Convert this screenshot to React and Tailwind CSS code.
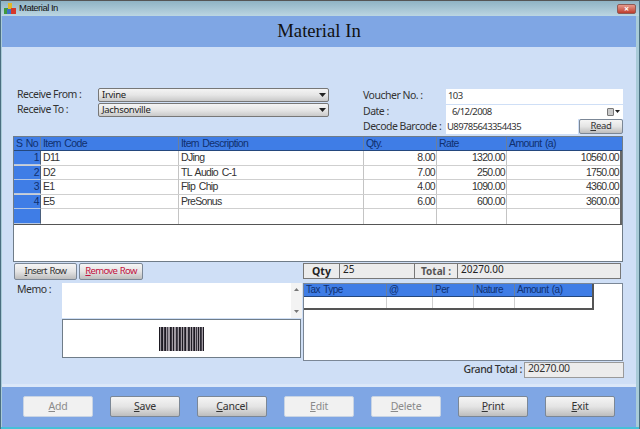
import React from "react";

const font = "font-['Noto_Sans','DejaVu_Sans',sans-serif]";
const gridFont = "font-['Liberation_Sans',sans-serif]";
const label = "text-[10.5px] tracking-[-0.5px] whitespace-nowrap";
const value = "text-[9.5px] tracking-[-0.6px] leading-none";

const rows = [
  { no: 1, code: "D11", desc: "DJing", qty: "8.00", rate: "1320.00", amount: "10560.00" },
  { no: 2, code: "D2", desc: "TL Audio C-1", qty: "7.00", rate: "250.00", amount: "1750.00" },
  { no: 3, code: "E1", desc: "Flip Chip", qty: "4.00", rate: "1090.00", amount: "4360.00" },
  { no: 4, code: "E5", desc: "PreSonus", qty: "6.00", rate: "600.00", amount: "3600.00" },
  { no: "", code: "", desc: "", qty: "", rate: "", amount: "" },
];

const gridCols = "grid grid-cols-[27px_138px_185px_73px_70px_1fr]";
const taxCols = "grid grid-cols-[83px_46px_41px_41px_1fr]";

const bars = [
  [0, "#1d1a22"], [2, "#2c2a33"], [3, "#1d1a22"], [5, "#3a3640"], [6, "#1d1a22"], [8, "#4a4650"],
  [11, "#1d1a22"], [12, "#3a3640"], [14, "#1d1a22"], [17, "#2c2a33"], [18, "#4a4650"], [20, "#1d1a22"],
  [21, "#3a3640"], [23, "#1d1a22"], [25, "#4a4650"], [26, "#1d1a22"], [29, "#2c2a33"], [30, "#3a3640"],
  [32, "#1d1a22"], [34, "#4a4650"], [35, "#1d1a22"], [37, "#3a3640"], [39, "#1d1a22"], [41, "#2c2a33"],
  [42, "#4a4650"], [44, "#1d1a22"],
];

const Caret = () => (
  <svg width="7" height="4" viewBox="0 0 7 4">
    <path d="M0 0h7L3.5 4z" fill="#222" />
  </svg>
);

const Select = ({ value }) => (
  <div className="h-[14px] w-[231px] flex items-center justify-between pl-[3px] pr-[2px] rounded-[2px] border border-[#777] bg-gradient-to-b from-[#f4f4f4] via-[#e6e6e6] to-[#c9c9c9] text-[9.5px] tracking-[-0.3px] leading-none text-[#222]">
    <span>{value}</span>
    <Caret />
  </div>
);

const Btn = ({ u, rest, off, w = "w-[70px]", h = "h-[21px]", red, text = "text-[10.5px] tracking-[-0.2px]" }) => (
  <div
    className={`${w} ${h} ${text} flex items-center justify-center rounded-[2px] border ${
      off
        ? "border-[#c8d4e4] bg-[#f1f1f1] text-[#8a8a8a]"
        : "border-[#7b8796] bg-gradient-to-b from-[#f5f5f5] via-[#e4e4e4] to-[#bdbdbd] text-[#333]"
    } ${red ? "text-[#c2123e]" : ""}`}
  >
    <span>
      <span className="underline">{u}</span>
      {rest}
    </span>
  </div>
);

export default function App() {
  return (
    <div className={`${font} w-[640px] h-[429px] flex flex-col overflow-hidden bg-[#a9cbd8] border-l border-r border-[#4a6f80] pl-[1px] pr-[3px] text-[10px]`}>
      {/* title bar */}
      <div className="h-[16px] -ml-[2px] -mr-[4px] shrink-0 flex items-center justify-between pl-[3px] pr-[4px] border-t border-[#555] bg-gradient-to-b from-[#8fb3c4] to-[#bcd6e2]">
        <div className={`${gridFont} flex items-center gap-[2px] text-[9.5px] tracking-[-0.5px] text-[#111]`}>
          <svg width="14" height="13" viewBox="0 0 14 13">
            <rect x="1" y="6" width="4" height="6" fill="#3f9a3d" />
            <rect x="5" y="1" width="4" height="6" fill="#e2b72a" />
            <rect x="4" y="7" width="4" height="5" fill="#3d72c8" />
            <rect x="8" y="6" width="5" height="6" fill="#d6382b" />
          </svg>
          <span>Material In</span>
        </div>
        <div className="w-[19px] h-[10px] flex items-center justify-center rounded-[2px] border border-[#8e5a55] bg-gradient-to-b from-[#e59a8d] to-[#bd3a2c] text-[9px] font-bold leading-none text-white">
          ×
        </div>
      </div>

      {/* page title */}
      <div className="h-[31px] shrink-0 flex items-center justify-center bg-[#7fa6e4] font-['Liberation_Serif',serif] text-[18.7px] text-[#111]">
        Material In
      </div>

      {/* form */}
      <div className="flex-1 flex flex-col pl-[11px] pr-[13px] pt-[41px] bg-[#cfdff6]">
        <div className="h-[47px] flex text-[#333]">
          <div className="w-[350px] shrink-0 flex flex-col gap-px pl-[4px] pt-0">
            <div className="h-[14px] flex items-center">
              <span className={`w-[81px] ${label}`}>Receive From :</span>
              <Select value="Irvine" />
            </div>
            <div className="h-[14px] flex items-center">
              <span className={`w-[81px] ${label}`}>Receive To :</span>
              <Select value="Jachsonville" />
            </div>
          </div>
          <div className="flex-1 flex flex-col">
            <div className="h-[16px] flex items-center">
              <span className={`w-[83px] ${label}`}>Voucher No. :</span>
              <div className={`flex-1 h-[15px] flex items-center pl-[2px] bg-white ${value}`}>103</div>
            </div>
            <div className="h-[15px] flex items-center">
              <span className={`w-[83px] ${label}`}>Date :</span>
              <div className={`flex-1 h-[14px] flex items-center justify-between pl-[6px] pr-[3px] bg-white ${value}`}>
                <span>6/12/2008</span>
                <span className="flex items-center gap-px">
                  <span className="w-[7px] h-[8px] rounded-[1px] border border-[#777] bg-[#c9c9c9]" />
                  <svg width="5" height="3" viewBox="0 0 5 3">
                    <path d="M0 0h5L2.500 3z" fill="#222" />
                  </svg>
                </span>
              </div>
            </div>
            <div className="h-[15px] flex items-center">
              <span className={`w-[83px] ${label}`}>Decode Barcode :</span>
              <div className={`w-[132px] h-[15px] flex items-center pl-[1px] bg-white ${value}`}>U89785643354435</div>
              <div className="ml-auto">
                <Btn u="R" rest="ead" w="w-[44px]" h="h-[15px]" text="text-[9.5px] tracking-[-0.3px]" />
              </div>
            </div>
          </div>
        </div>

        {/* item grid */}
        <div className={`${gridFont} mt-[1px] h-[126px] w-[610px] border border-[#6f7c88] bg-white`}>
          <div className={`${gridCols} h-[14px] bg-[#3f7de6] border-b border-[#24477d] text-[10.5px] tracking-[-0.6px] [word-spacing:1px] leading-[13px] text-[#10306e]`}>
            {["S No", "Item Code", "Item Description", "Qty.", "Rate", "Amount (a)"].map((h) => (
              <div key={h} className="pl-[2px] border-r border-[#6a7f9c] last:border-r-0 whitespace-nowrap">{h}</div>
            ))}
          </div>
          <div className="border-b border-[#555] border-r-2 border-r-[#666]">
            {rows.map((r, i) => (
              <div key={i} className={`${gridCols} h-[14.6px] leading-[13px] text-[10.5px] tracking-[-0.7px] [word-spacing:1.5px] text-[#333] border-b border-[#cfcfcf] last:border-b-0`}>
                <div className="pr-[1px] text-right bg-[#3f7de6] border-r border-[#4a5f7c] border-b border-b-[#b7c8e2] text-[#10306e]">{r.no}</div>
                <div className="pl-[2px] border-r border-[#c4c4c4]">{r.code}</div>
                <div className="pl-[2px] border-r border-[#c4c4c4]">{r.desc}</div>
                <div className="pr-[1px] text-right border-r border-[#c4c4c4]">{r.qty}</div>
                <div className="pr-[1px] text-right border-r border-[#c4c4c4]">{r.rate}</div>
                <div className="pr-[1px] text-right">{r.amount}</div>
              </div>
            ))}
          </div>
        </div>

        {/* buttons + totals */}
        <div className="h-[19px] mt-px flex items-start">
          <div className="flex gap-[2px] pl-px">
            <Btn u="I" rest="nsert Row" w="w-[63px]" h="h-[17px]" text="text-[9.5px] tracking-[-0.7px] [word-spacing:1px]" />
            <Btn u="R" rest="emove Row" w="w-[64px]" h="h-[17px]" text="text-[9.5px] tracking-[-0.7px] [word-spacing:1px]" red />
          </div>
          <div className="ml-[160px] w-[318px] h-[16px] flex border border-[#777] bg-[#ececec] text-[#222]">
            <div className="w-[36px] text-center font-bold text-[10.5px] leading-[14px] border-r border-[#777]">Qty</div>
            <div className="w-[75px] pl-[3px] text-[10px] leading-[11px] border-r border-[#777]">25</div>
            <div className="w-[43px] text-center font-bold text-[#555] text-[10px] leading-[15px] border-r border-[#777]">Total :</div>
            <div className="flex-1 pl-[3px] text-[10px] leading-[11px]">20270.00</div>
          </div>
        </div>

        {/* memo + tax */}
        <div className="h-[78px] flex mt-[1px]">
          <div className={`w-[49px] shrink-0 pl-[4px] ${label} leading-[12px] text-[#333]`}>Memo :</div>
          <div className="w-[240px] shrink-0 flex flex-col">
            <div className="h-[35px] flex justify-between bg-white">
              <span />
              <div className="w-[11px] flex flex-col items-center justify-between py-[5px] bg-[#f3f3f3]">
                <svg width="5" height="3" viewBox="0 0 5 3"><path d="M2.500 0L5 3H0z" fill="#777" /></svg>
                <svg width="5" height="3" viewBox="0 0 5 3"><path d="M0 0h5L2.500 3z" fill="#777" /></svg>
              </div>
            </div>
            <div className="mt-px h-[39px] w-[239px] flex items-center justify-center border border-[#6f7c88] bg-white">
              <svg width="45" height="24" viewBox="0 0 45 24">
                <rect width="45" height="24" fill="#a09aa2" />
                {bars.map(([x, c]) => (
                  <rect key={x} x={x} y="0" width="1" height="24" fill={c} />
                ))}
              </svg>
            </div>
          </div>
          <div className="ml-px w-[320px] h-[78px] border border-[#7b8796] bg-white">
            <div className="w-[290px] h-[26px] border-r-2 border-b-2 border-[#555]">
              <div className={`${taxCols} ${gridFont} h-[13px] bg-[#3f7de6] border-b border-[#24477d] text-[10px] tracking-[-0.5px] [word-spacing:1px] leading-[12px] text-[#10306e]`}>
                {["Tax Type", "@", "Per", "Nature", "Amount (a)"].map((h) => (
                  <div key={h} className="pl-[2px] border-r border-[#6a7f9c] last:border-r-0 whitespace-nowrap">{h}</div>
                ))}
              </div>
              <div className={`${taxCols} h-[11px]`}>
                <div className="border-r border-[#cfcfcf]" />
                <div className="border-r border-[#cfcfcf]" />
                <div className="border-r border-[#cfcfcf]" />
                <div className="border-r border-[#cfcfcf]" />
                <div />
              </div>
            </div>
          </div>
        </div>

        {/* grand total */}
        <div className="h-[17px] flex items-center justify-end -mr-px text-[#333]">
          <span className="mr-[2px] font-medium text-[10.5px] tracking-[-0.4px]">Grand Total :</span>
          <div className="w-[100px] h-[16px] pl-[3px] leading-[11px] text-[10.5px] tracking-[-0.4px] border border-[#9a9a9a] bg-[#ececec]">20270.00</div>
        </div>
      </div>

      {/* footer */}
      <div className="h-[3px] shrink-0 bg-[#dbe7f8]" />
      <div className="h-[40px] shrink-0 flex items-center gap-[17px] pl-[21px] bg-[#7fa6e4] pb-[1px]">
        <Btn u="A" rest="dd" off />
        <Btn u="S" rest="ave" />
        <Btn u="C" rest="ancel" />
        <Btn u="E" rest="dit" off />
        <Btn u="D" rest="elete" off />
        <Btn u="P" rest="rint" />
        <Btn u="E" rest="xit" />
      </div>
      <div className="h-[2px] -ml-[2px] -mr-[4px] shrink-0 bg-[#45c0d8]" />
    </div>
  );
}
